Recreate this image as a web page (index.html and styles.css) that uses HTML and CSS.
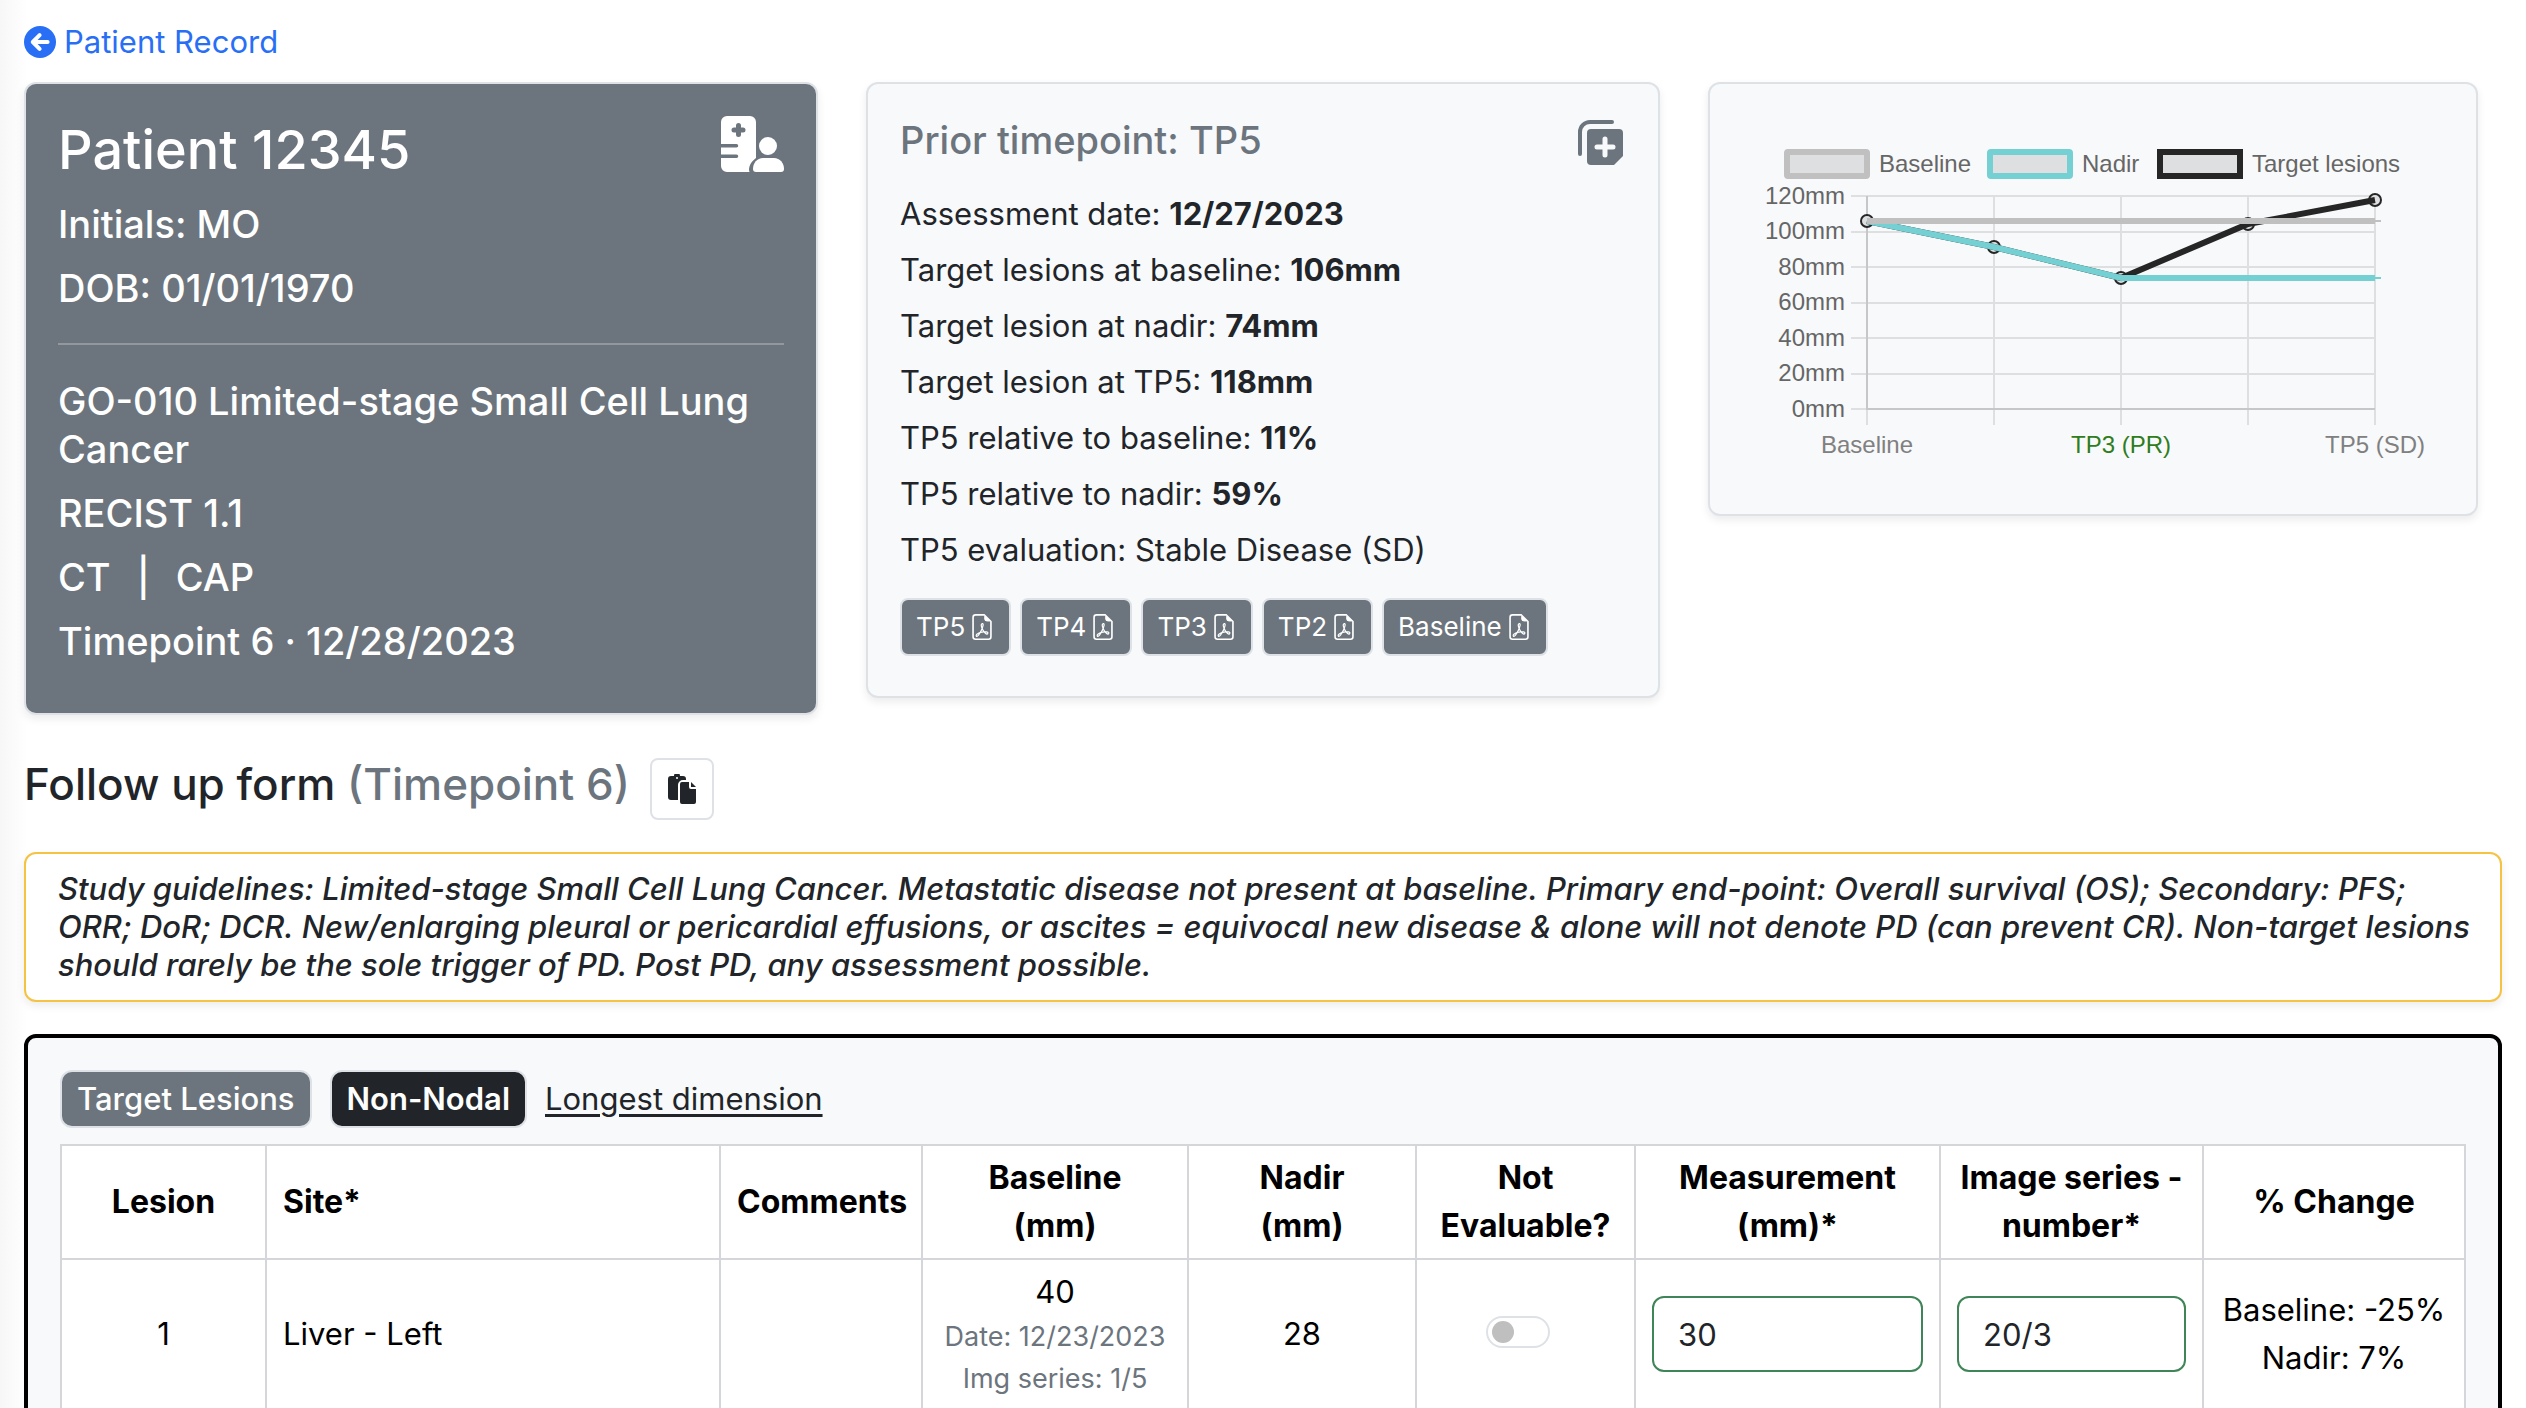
FILE: index.html
```html
<!DOCTYPE html>
<html lang="en">
<head>
<meta charset="utf-8">
<title>Follow up form</title>
<meta name="viewport" content="width=device-width, initial-scale=1">
<link rel="stylesheet" href="styles.css">
</head>
<body>
<svg class="sprite" aria-hidden="true">
  <symbol id="pdf" viewBox="0 0 16 16">
    <path d="M14 14V4.500L9.500 0H4a2 2 0 0 0-2 2v12a2 2 0 0 0 2 2h8a2 2 0 0 0 2-2M9.500 3A1.500 1.500 0 0 0 11 4.500h2V14a1 1 0 0 1-1 1H4a1 1 0 0 1-1-1V2a1 1 0 0 1 1-1h5.500z"/>
    <path d="M4.603 14.087a.8.8 0 0 1-.438-.42c-.195-.388-.13-.776.080-1.102.198-.307.526-.568.897-.787a7.700 7.700 0 0 1 1.482-.645 20 20 0 0 0 1.062-2.227 7.300 7.300 0 0 1-.43-1.295c-.086-.4-.119-.796-.046-1.136.075-.354.274-.672.650-.823.192-.077.400-.120.602-.077a.7.700 0 0 1 .477.365c.088.164.120.356.127.538.007.188-.012.396-.047.614-.084.510-.270 1.134-.520 1.794a11 11 0 0 0 .980 1.686 5.800 5.800 0 0 1 1.334.050c.364.066.734.195.960.465.120.144.193.320.200.518.007.192-.047.382-.138.563a1.040 1.040 0 0 1-.354.416.860.860 0 0 1-.510.138c-.331-.014-.654-.196-.933-.417a5.700 5.700 0 0 1-.911-.950 11.700 11.700 0 0 0-1.997.406 11.300 11.300 0 0 1-1.020 1.510c-.292.350-.609.656-.927.787a.8.800 0 0 1-.580.029m1.379-1.901q-.250.115-.459.238c-.328.194-.541.383-.647.547-.094.145-.096.250-.040.361q.016.032.026.044l.035-.012c.137-.056.355-.235.635-.572a8 8 0 0 0 .450-.606m1.640-1.330a13 13 0 0 1 1.010-.193 12 12 0 0 1-.510-.858 21 21 0 0 1-.500 1.050zm2.446.450q.226.245.435.410c.240.190.407.253.498.256a.1.100 0 0 0 .070-.015.300.300 0 0 0 .094-.125.440.440 0 0 0 .059-.200.100.100 0 0 0-.026-.063c-.052-.062-.200-.152-.518-.209a4 4 0 0 0-.612-.053zM8.078 7.800a7 7 0 0 0 .200-.828q.046-.282.038-.465a.6.600 0 0 0-.032-.198.500.500 0 0 0-.145.040c-.087.035-.158.106-.196.283-.040.192-.030.469.046.822q.036.167.090.346z"/>
    <path d="M9.500 1v2A1.500 1.500 0 0 0 11 4.500h2.500z"/>
  </symbol>
</svg>
<main class="page">
  <a class="back" href="#record">
    <svg class="back-icon" viewBox="0 0 16 16" aria-hidden="true"><circle cx="8" cy="8" r="8"/><path d="M11.800 8H5M7.800 4.600 4.400 8l3.400 3.400" class="arrow"/></svg>
    <span>Patient Record</span>
  </a>

  <section class="summary">
    <article class="card patient">
      <header class="card-head">
        <h1>Patient 12345</h1>
        <svg class="patient-icon" viewBox="0 0 63 56" aria-hidden="true">
          <path fill="#fff" d="M6 0h23a6 6 0 0 1 6 6v36c-4 3-7 7-7 12l.5 2H6a6 6 0 0 1-6-6V42h15.500a1.700 1.700 0 0 0 0-3.500H0v-7h15.500a1.700 1.700 0 0 0 0-3.500H0V6a6 6 0 0 1 6-6z"/>
          <path d="M17.500 9.500v9M13 14h9" stroke="#6c757d" stroke-width="5" stroke-linecap="round"/>
          <circle cx="47" cy="30" r="9" fill="#fff"/>
          <path fill="#fff" d="M42 42h11c6 0 10 5 10 11 0 2-1 3-3 3H35c-2 0-3-1-3-3 0-6 4-11 10-11z"/>
        </svg>
      </header>
      <p>Initials: MO</p>
      <p>DOB: 01/01/1970</p>
      <hr>
      <p>GO-010 Limited-stage Small Cell Lung Cancer</p>
      <p>RECIST 1.1</p>
      <p class="scan"><span>CT</span><span>|</span><span>CAP</span></p>
      <p>Timepoint 6 · 12/28/2023</p>
    </article>

    <article class="card prior">
      <header class="card-head">
        <h2>Prior timepoint: TP5</h2>
        <svg class="copy-icon" viewBox="0 0 45 45" aria-hidden="true">
          <path d="M2 34V12A10 10 0 0 1 12 2h22" fill="none" stroke="#6c757d" stroke-width="4" stroke-linecap="round"/>
          <path fill="#6c757d" d="M13 9h28a4 4 0 0 1 4 4v23l-9 9H13a4 4 0 0 1-4-4V13a4 4 0 0 1 4-4z"/>
          <path d="M27 19v16M19 27h16" stroke="#f8f9fb" stroke-width="5" stroke-linecap="round"/>
        </svg>
      </header>
      <ul class="facts">
        <li>Assessment date: <b>12/27/2023</b></li>
        <li>Target lesions at baseline: <b>106mm</b></li>
        <li>Target lesion at nadir: <b>74mm</b></li>
        <li>Target lesion at TP5: <b>118mm</b></li>
        <li>TP5 relative to baseline: <b>11%</b></li>
        <li>TP5 relative to nadir: <b>59%</b></li>
        <li>TP5 evaluation: Stable Disease (SD)</li>
      </ul>
      <div class="reports">
        <button type="button">TP5<svg aria-hidden="true"><use href="#pdf"/></svg></button>
        <button type="button">TP4<svg aria-hidden="true"><use href="#pdf"/></svg></button>
        <button type="button">TP3<svg aria-hidden="true"><use href="#pdf"/></svg></button>
        <button type="button">TP2<svg aria-hidden="true"><use href="#pdf"/></svg></button>
        <button type="button">Baseline<svg aria-hidden="true"><use href="#pdf"/></svg></button>
      </div>
    </article>

    <article class="card chart">
      <svg viewBox="0 0 702 366" role="img" aria-label="Lesion size by timepoint">
        <g fill="#dedfe1" stroke-width="6">
          <rect x="45" y="36" width="80" height="24" rx="1" stroke="#c0c0c0"/>
          <rect x="248" y="36" width="80" height="24" rx="1" stroke="#74d0d3"/>
          <rect x="418" y="36" width="80" height="24" stroke="#262626"/>
        </g>
        <g class="label">
          <text x="137" y="56">Baseline</text>
          <text x="340" y="56">Nadir</text>
          <text x="510" y="56">Target lesions</text>
        </g>
        <g class="label end">
          <text x="103" y="88">120mm</text>
          <text x="103" y="123">100mm</text>
          <text x="103" y="159">80mm</text>
          <text x="103" y="194">60mm</text>
          <text x="103" y="230">40mm</text>
          <text x="103" y="265">20mm</text>
          <text x="103" y="301">0mm</text>
        </g>
        <path class="grid" d="M109 80H633M109 116H633M109 151H633M109 187H633M109 222H633M109 258H633M109 293H125M125 293V309M252 80V309M379 80V309M506 80V309M633 80V309"/>
        <path class="axis" d="M125 80V293H633"/>
        <g class="points">
          <circle cx="125" cy="105" r="6"/>
          <circle cx="252" cy="131" r="6"/>
          <circle cx="379" cy="162" r="6"/>
          <circle cx="506" cy="108" r="6"/>
          <circle cx="633" cy="84" r="6"/>
        </g>
        <path class="series" stroke="#262626" d="M125 105 252 131 379 162 506 108 633 84"/>
        <path class="series" stroke="#74d0d3" d="M125 105 252 131 379 162H633"/>
        <path class="series" stroke="#c0c0c0" d="M125 105H633"/>
        <path d="M633 105h6" stroke="#c0c0c0" stroke-width="2"/>
        <path d="M633 162h6" stroke="#74d0d3" stroke-width="2"/>
        <g class="label middle">
          <text x="125" y="337">Baseline</text>
          <text x="379" y="337" class="response">TP3 (PR)</text>
          <text x="633" y="337">TP5 (SD)</text>
        </g>
      </svg>
    </article>
  </section>

  <header class="form-head">
    <h2>Follow up form <span>(Timepoint 6)</span></h2>
    <button type="button" class="paste" aria-label="Copy form">
      <svg viewBox="0 0 28 30" aria-hidden="true">
        <path d="M3 2h3a3 3 0 0 1 6 0h3a3 3 0 0 1 3 3v1h-3a5 5 0 0 0-5 5v15H3a3 3 0 0 1-3-3V5a3 3 0 0 1 3-3z"/>
        <circle cx="9" cy="4" r="1" fill="#fff"/>
        <path d="M14 8h7v5a2 2 0 0 0 2 2h5v13a2 2 0 0 1-2 2H14a2 2 0 0 1-2-2V10a2 2 0 0 1 2-2z"/>
        <path d="M23 8l5 5h-5z"/>
      </svg>
    </button>
  </header>

  <p class="guidelines">Study guidelines: Limited-stage Small Cell Lung Cancer. Metastatic disease not present at baseline. Primary end-point: Overall survival (OS); Secondary: PFS; ORR; DoR; DCR. New/enlarging pleural or pericardial effusions, or ascites = equivocal new disease &amp; alone will not denote PD (can prevent CR). Non-target lesions should rarely be the sole trigger of PD. Post PD, any assessment possible.</p>

  <section class="lesions">
    <div class="tags">
      <span class="tag">Target Lesions</span>
      <span class="tag dark">Non-Nodal</span>
      <a href="#longest">Longest dimension</a>
    </div>
    <table>
      <colgroup><col class="c1"><col class="c2"><col class="c3"><col class="c4"><col class="c5"><col class="c6"><col class="c7"><col class="c8"><col class="c9"></colgroup>
      <thead>
        <tr>
          <th scope="col">Lesion</th>
          <th scope="col" class="left">Site*</th>
          <th scope="col">Comments</th>
          <th scope="col">Baseline<br>(mm)</th>
          <th scope="col">Nadir<br>(mm)</th>
          <th scope="col" id="ne">Not<br>Evaluable?</th>
          <th scope="col" id="mm">Measurement<br>(mm)*</th>
          <th scope="col" id="img">Image series -<br>number*</th>
          <th scope="col">% Change</th>
        </tr>
      </thead>
      <tbody>
        <tr>
          <td>1</td>
          <td class="left">Liver - Left</td>
          <td></td>
          <td>40<small>Date: 12/23/2023</small><small>Img series: 1/5</small></td>
          <td>28</td>
          <td class="toggle"><input type="checkbox" role="switch" class="switch" aria-labelledby="ne"></td>
          <td><input type="text" class="field" value="30" aria-labelledby="mm"></td>
          <td><input type="text" class="field" value="20/3" aria-labelledby="img"></td>
          <td>Baseline: -25%<br>Nadir: 7%</td>
        </tr>
      </tbody>
    </table>
  </section>
</main>
</body>
</html>
```
FILE: styles.css
```css
* { box-sizing: border-box; }

body {
  margin: 0;
  height: 100vh;
  overflow: hidden;
  font: 400 31px/48px Inter, "Liberation Sans", sans-serif;
  color: #212529;
  background: linear-gradient(to right, #f7f7f7, #fff 28px);
}

h1, h2, p, ul { margin: 0; padding: 0; font-weight: 500; }
ul { list-style: none; }
button, input { font: inherit; color: inherit; }
.sprite { display: none; }

.page { padding: 18px 24px 0; }

.back {
  display: flex;
  width: max-content;
  align-items: center;
  gap: 8px;
  color: #286ff6;
  text-decoration: none;
}
.back-icon { width: 32px; height: 32px; fill: currentColor; }
.back-icon .arrow { fill: none; stroke: #fff; stroke-width: 2; stroke-linecap: round; stroke-linejoin: round; }

.summary {
  display: grid;
  grid-template-columns: repeat(3, 1fr);
  gap: 48px;
  align-items: start;
  margin-top: 16px;
}

.card {
  padding: 32px;
  border: 2px solid #dee2e6;
  border-radius: 12px;
  background: #f8f9fb;
  box-shadow: 0 4px 8px rgba(0, 0, 0, .08);
}
.card-head { display: flex; justify-content: space-between; align-items: flex-start; }

.patient { background: #6c757d; color: #fff; font-size: 38px; }
.patient h1 { font-size: 54px; line-height: 68px; margin-bottom: 16px; }
.patient p { margin-bottom: 16px; }
.patient hr { height: 2px; margin: 31px 0 32px; border: 0; background: #92989e; }
.patient-icon { width: 63px; height: 56px; }
.scan { display: flex; gap: 26px; }

.prior { padding-bottom: 40px; }
.prior h2 { font-size: 38px; line-height: 48px; color: #6c757d; margin-bottom: 26px; }
.copy-icon { width: 45px; height: 45px; margin: 4px 3px 0 0; }
.facts { display: grid; gap: 8px; }
.facts li { font-weight: 400; }
.reports { display: flex; gap: 9px; margin-top: 24px; }
.reports button {
  display: flex;
  align-items: center;
  gap: 4px;
  height: 58px;
  padding: 0 14px;
  border: 2px solid #dee2e6;
  border-radius: 8px;
  background: #6c757d;
  color: #fff;
  font-size: 26px;
}
.reports svg { width: 26px; height: 26px; fill: currentColor; }

.chart { margin-right: 24px; }
.chart svg { display: block; width: 100%; }
.label { font: 24px "Liberation Sans", Arial, sans-serif; fill: #666; }
.end { text-anchor: end; }
.middle { text-anchor: middle; fill: #808080; }
.response { fill: #2f7d1b; }
.grid { stroke: #dedfe1; stroke-width: 2; }
.axis { fill: none; stroke: #c6c7c9; stroke-width: 2; }
.points { fill: #dedfe1; stroke: #262626; stroke-width: 2; }
.series { fill: none; stroke-width: 6; stroke-linejoin: miter; }

.form-head { display: flex; align-items: flex-start; gap: 20px; margin-top: 43px; }
.form-head h2 { font-size: 44px; line-height: 52px; }
.form-head h2 span { color: #6c757d; }
.paste {
  display: grid;
  place-items: center;
  width: 64px;
  height: 62px;
  padding: 0;
  border: 2px solid #dee2e6;
  border-radius: 8px;
  background: #fff;
}
.paste svg { width: 28px; height: 30px; fill: #212529; }

.guidelines {
  margin-top: 32px;
  padding: 16px 24px 16px 32px;
  border: 2px solid #f5c242;
  border-radius: 12px;
  background: #fff;
  box-shadow: 0 4px 8px rgba(0, 0, 0, .08);
  font-style: italic;
  line-height: 38px;
}

.lesions {
  margin-top: 32px;
  padding: 32px;
  border: 4px solid #000;
  border-radius: 12px;
  background: #f8f9fb;
}
.tags { display: flex; align-items: center; gap: 18px; margin-bottom: 16px; }
.tag {
  padding: 3px 15px;
  border: 2px solid #dee2e6;
  border-radius: 12px;
  background: #6c757d;
  color: #fff;
  font-weight: 500;
}
.dark { background: #212529; font-weight: 600; }
.tags a { color: inherit; text-underline-offset: 4px; }

table {
  width: 100%;
  table-layout: fixed;
  border-collapse: collapse;
  background: #fff;
  color: #000;
}
.c1 { width: 205px; }
.c3 { width: 202px; }
.c4 { width: 266px; }
.c5 { width: 228px; }
.c6 { width: 219px; }
.c7 { width: 305px; }
.c8 { width: 263px; }
.c9 { width: 262px; }
th, td { padding: 8px 16px; border: 2px solid #d5d6da; text-align: center; vertical-align: middle; }
th { font-size: 32px; font-weight: 700; white-space: nowrap; }
.left { text-align: left; }
.toggle { padding-right: 32px; padding-bottom: 12px; }
small { display: block; font-size: 27px; line-height: 42px; color: #6c757d; white-space: nowrap; }

.field {
  display: block;
  width: 100%;
  height: 76px;
  padding: 0 24px;
  border: 2px solid #3f8558;
  border-radius: 12px;
  background: #fff;
  color: #212529;
}
.switch {
  appearance: none;
  display: flex;
  align-items: center;
  width: 64px;
  height: 32px;
  margin: 0 auto;
  padding: 0 4px;
  border: 2px solid #dee2e6;
  border-radius: 16px;
  background: #fff;
}
.switch::before { content: ""; width: 22px; height: 22px; border-radius: 50%; background: #bfbfbf; }
```
